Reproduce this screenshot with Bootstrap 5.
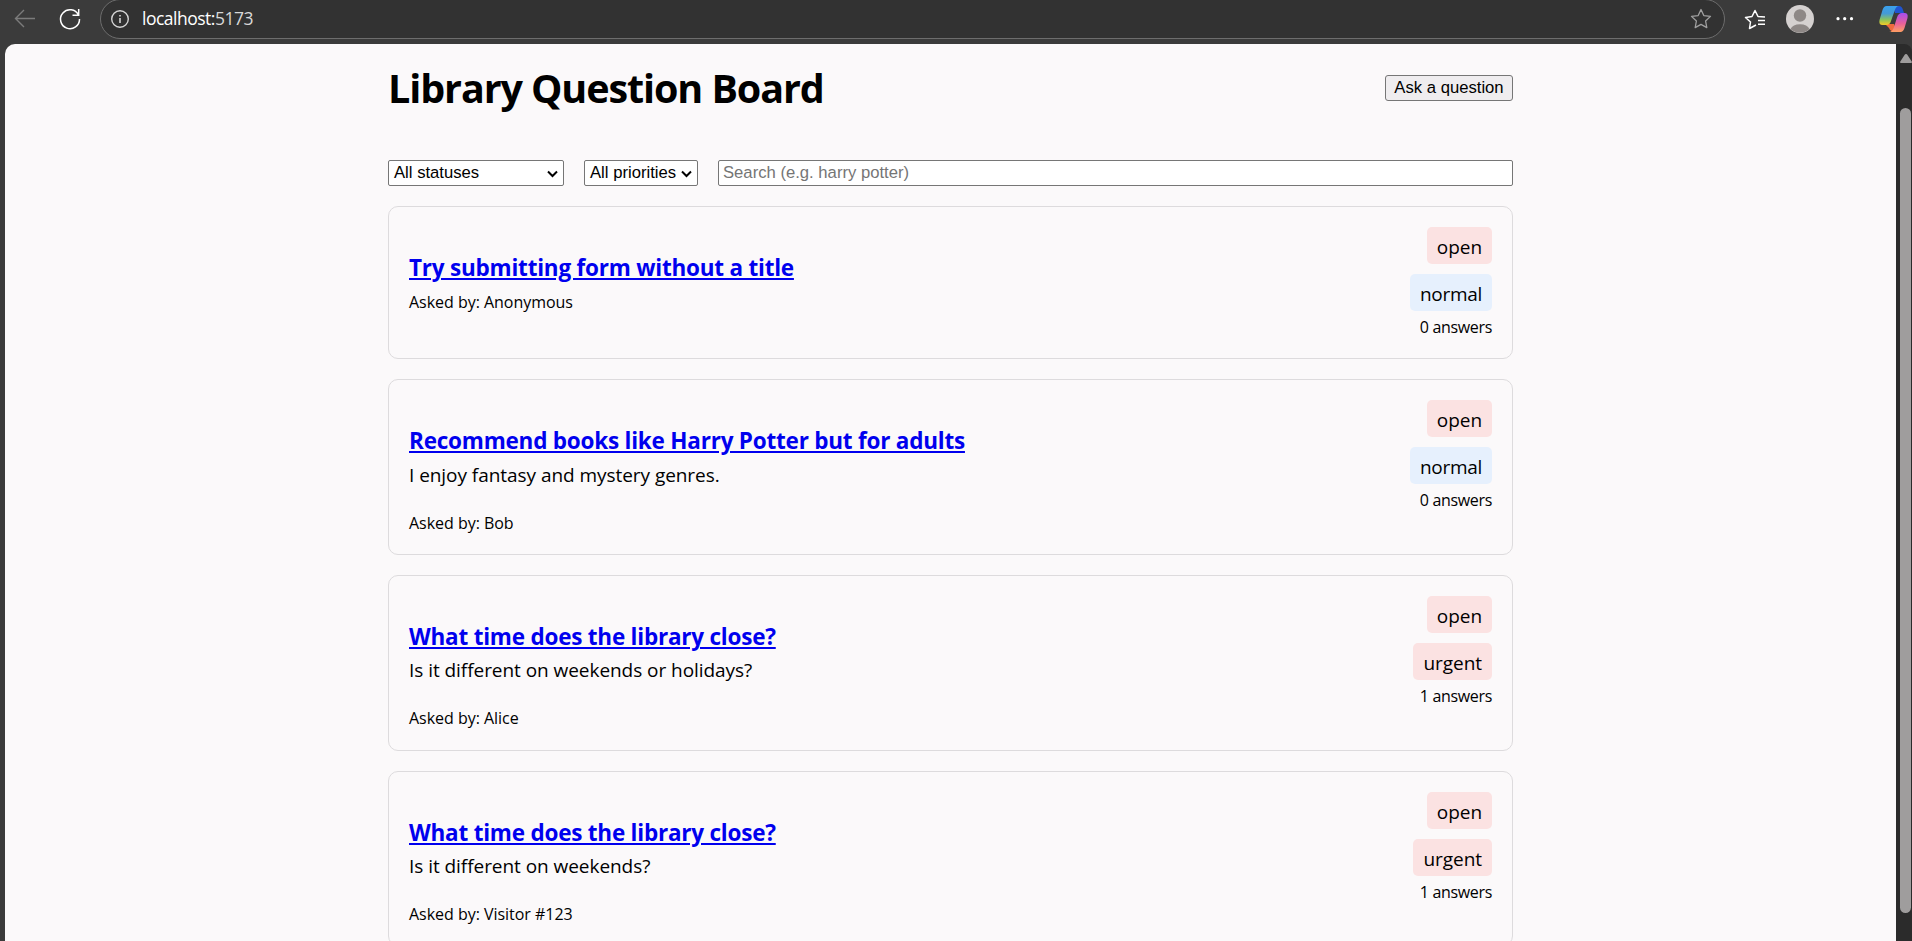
<!DOCTYPE html>
<html lang="en">
<head>
<meta charset="utf-8">
<title>Library Question Board</title>
<link href="https://cdn.jsdelivr.net/npm/bootstrap@5.3.0/dist/css/bootstrap.min.css" rel="stylesheet">
<style>
  body { background: #3b3b3b; color: #000; font-family: "Open Sans", sans-serif; font-size: 19px; line-height: 27px; letter-spacing: -.05px; }
  .toolbar { height: 44px; flex: none; }
  .toolbar svg { display: block; flex: none; }
  .address { width: 1625px; height: 40px; margin: -1px 0 0 18px; background: #323232; border: 1px solid #6d6d6d; border-radius: 20px; padding: 0 12px 0 9px; }
  .url { font-size: 17.5px; color: #fff; margin: -1px 0 0 12px; letter-spacing: -.5px; }
  .url span { color: #d8d8d8; }
  .page { background: #fbf9fa; border-top-left-radius: 10px; margin-left: 5px; }
  .scroll { width: 16px; background: #2b2b2b; border-top-right-radius: 8px; padding: 10px 0 0 4px; }
  .scroll i { display: block; width: 11px; height: 805px; margin-top: 45px; border-radius: 6px; background: #9f9d9d; }
  .board { width: 1125px; margin-left: 383px; }
  .board h1 { font-size: 39.5px; font-weight: 700; line-height: 52px; margin: 0; letter-spacing: -1.1px; }
  .head { height: 116px; padding-top: 18px; }
  .filters { gap: 20px; margin-bottom: 20px; }
  .ask, .pick, .find { font: 16.667px/20px "Liberation Sans", sans-serif; letter-spacing: 0; height: 26px; border: 1px solid #767676; border-radius: 2px; color: #000; }
  .ask { width: 128px; margin-top: 13px; padding: 0; background: #efedef; border-radius: 3px; }
  .pick { background: #fff; padding: 0 4px 0 5px; line-height: 24px; }
  .by-status { width: 176px; }
  .by-priority { width: 114px; }
  .find { background: #fff; padding: 0 4px; }
  .find::placeholder { color: #757575; opacity: 1; }
  .question { background: transparent; border: 1px solid #dddbdd; border-radius: 10px; padding: 20px; height: 175.7px; margin-bottom: 20px; }
  .question.short { height: 153.300px; }
  .question h3 { font-size: 22.5px; font-weight: 700; line-height: 30px; margin: 26px 0 0; letter-spacing: -.22px; }
  .question h3 a { color: #0000ee; text-decoration-thickness: 2px; text-underline-offset: 2px; }
  .question p { margin: 5.500px 0 0; line-height: 27px; }
  .by { font-size: 16px; line-height: 22px; display: block; margin-top: 23px; letter-spacing: -.03px; }
  .short .by { margin-top: 8px; }
  .tag { height: 37px; line-height: 41px; padding: 0 10px; border-radius: 5px; background: #fbe2e2; margin-bottom: 10px; }
  .tag.calm { background: #e6f0fd; letter-spacing: -.3px; }
  .count { font-size: 16px; line-height: 22px; margin-top: -5px; letter-spacing: -.33px; }
</style>
</head>
<body class="vh-100 overflow-hidden d-flex flex-column">
<header class="toolbar d-flex align-items-start">
  <svg width="82" height="40" fill="none"><path d="M35 18.500H16M24 10l-8.500 8.500 8.500 8.500" stroke="#7b7b7b" stroke-width="1.400"/><path d="M78.500 15A9.500 9.500 0 1 0 79.500 19M78.700 9v6.200h-6.200" stroke="#fff" stroke-width="1.500"/></svg>
  <div class="address d-flex align-items-center">
    <svg width="20" height="20" fill="none" stroke="#d5d5d5" stroke-width="1.400"><circle cx="10" cy="10" r="8.300"/><path d="M10 9v5M10 6v1.500" stroke-width="1.600"/></svg>
    <div class="url">localhost:<span>5173</span></div>
    <svg class="ms-auto" width="22" height="22" viewBox="0 0 22 22" fill="none" stroke="#a0a0a0" stroke-width="1.300" stroke-linejoin="round"><path d="M11 1.500l2.800 6.100 6.700.8-4.900 4.600 1.200 6.600L11 16.400l-5.800 3.200L6.400 13 1.500 8.400l6.700-.8z"/></svg>
  </div>
  <svg class="ms-auto" width="187" height="40" fill="none">
    <defs>
      <linearGradient id="cool" x1="0" y1="0" x2="0" y2="1"><stop stop-color="#3aa0ee"/><stop offset=".4" stop-color="#459bd5"/><stop offset=".72" stop-color="#8bc45c"/><stop offset="1" stop-color="#f5cc25"/></linearGradient>
      <linearGradient id="warm" x1="0" y1="0" x2="0" y2="1"><stop stop-color="#a64df0"/><stop offset=".55" stop-color="#e8609a"/><stop offset="1" stop-color="#ff9f62"/></linearGradient>
    </defs>
    <path d="M31 25l-6.500 3.500 1-6.500-5-4.500 6.500-1L30 10.500l3 6 7 .5" stroke="#fff" stroke-width="1.500" stroke-linejoin="round"/>
    <path d="M33 20.500h7M33 24.300h7" stroke="#fff" stroke-width="1.500"/>
    <circle cx="75" cy="19" r="14" fill="#d5d1d0"/><circle cx="75" cy="15.500" r="6.200" fill="#8e8886"/><path d="M65.500 29a10 7 0 0 1 19 0 14 14 0 0 1-19 0z" fill="#8e8886"/>
    <g fill="#fff"><circle cx="113" cy="18.700" r="1.600"/><circle cx="119.700" cy="18.700" r="1.600"/><circle cx="126.500" cy="18.700" r="1.600"/></g>
    <path d="M168 6h6q3 0 4 4l1 3h-9z" fill="#2054d0"/><path d="M160 24h9l3 8q-7 0-8-4z" fill="#ef6a3d"/>
    <path d="M161.500 6H174q-3 0-4.500 5l-3.500 10q-1 4-5 4h-3.500q-4 0-3-5l3-10q1.300-4 4-4z" fill="url(#cool)"/>
    <path d="M175.500 32H164q3.500 0 5-5l3-9.500q1.300-4.500 5-4.500h2.500q4 0 3 5l-3 10q-1.300 4-4 4z" fill="url(#warm)"/>
  </svg>
</header>
<div class="d-flex flex-grow-1 overflow-hidden">
  <main class="page flex-grow-1 overflow-hidden">
    <div class="board">
      <div class="head d-flex justify-content-between align-items-start">
        <h1>Library Question Board</h1>
        <button class="ask">Ask a question</button>
      </div>
      <div class="filters d-flex">
        <div class="pick by-status d-flex justify-content-between">All statuses<svg width="13" height="24"><path d="M2 10.500l4.500 4.500L11 10.500" fill="none" stroke="#000" stroke-width="2"/></svg></div>
        <div class="pick by-priority d-flex justify-content-between">All priorities<svg width="13" height="24"><path d="M2 10.500l4.500 4.500L11 10.500" fill="none" stroke="#000" stroke-width="2"/></svg></div>
        <input class="find flex-grow-1" placeholder="Search (e.g. harry potter)">
      </div>
      <article class="question short d-flex justify-content-between">
        <div><h3><a href="#">Try submitting form without a title</a></h3><span class="by">Asked by: Anonymous</span></div>
        <div class="d-flex flex-column align-items-end"><span class="tag">open</span><span class="tag calm">normal</span><span class="count">0 answers</span></div>
      </article>
      <article class="question d-flex justify-content-between">
        <div><h3><a href="#">Recommend books like Harry Potter but for adults</a></h3><p>I enjoy fantasy and mystery genres.</p><span class="by">Asked by: Bob</span></div>
        <div class="d-flex flex-column align-items-end"><span class="tag">open</span><span class="tag calm">normal</span><span class="count">0 answers</span></div>
      </article>
      <article class="question d-flex justify-content-between">
        <div><h3><a href="#">What time does the library close?</a></h3><p>Is it different on weekends or holidays?</p><span class="by">Asked by: Alice</span></div>
        <div class="d-flex flex-column align-items-end"><span class="tag">open</span><span class="tag">urgent</span><span class="count">1 answers</span></div>
      </article>
      <article class="question d-flex justify-content-between">
        <div><h3><a href="#">What time does the library close?</a></h3><p>Is it different on weekends?</p><span class="by">Asked by: Visitor #123</span></div>
        <div class="d-flex flex-column align-items-end"><span class="tag">open</span><span class="tag">urgent</span><span class="count">1 answers</span></div>
      </article>
    </div>
  </main>
  <aside class="scroll flex-shrink-0"><svg class="d-block" width="12" height="9"><path d="M6 0q1 0 1.500 1L12 8q0 1-1 1H1q-1 0-1-1l4.500-7Q5 0 6 0z" fill="#9f9d9d"/></svg><i></i></aside>
</div>
<script src="https://cdn.jsdelivr.net/npm/bootstrap@5.3.0/dist/js/bootstrap.bundle.min.js"></script>
</body>
</html>
